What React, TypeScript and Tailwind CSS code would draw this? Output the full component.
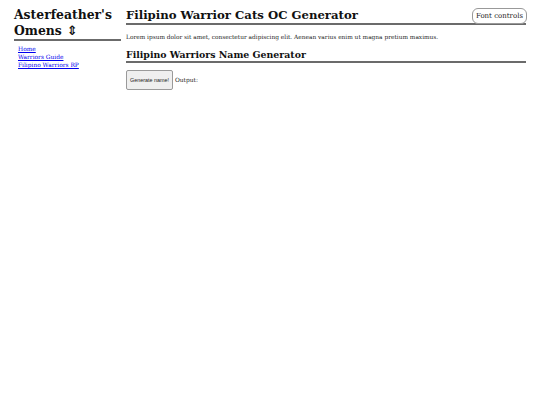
import React from "react";

export default function App() {
  const serif = { fontFamily: '"DejaVu Serif", Georgia, serif' };
  return (
    <div className="min-h-[405px] w-[540px] bg-white text-black" style={serif}>
      <div className="flex gap-[5px] px-[14px] pt-[7px]">
        <aside className="w-[107px] shrink-0">
          <h1 className="border-b-2 border-[#6b6b6b] text-[12.4px] font-bold leading-[16px] text-[#111]">
            <span className="block">Asterfeather's</span>
            <span className="flex items-start">
              <span>Omens</span>
              <span
                className="ml-[5px] h-[16px] text-[13px] font-bold leading-[16px]"
                style={{ fontFamily: '"DejaVu Sans", sans-serif' }}
              >
                ⇕
              </span>
            </span>
          </h1>
          <ul className="mt-[4px] pl-[4px] text-[5.9px] leading-[8px]">
            <li><a href="#" className="text-[#0000ee] underline">Home</a></li>
            <li><a href="#" className="text-[#0000ee] underline">Warriors Guide</a></li>
            <li><a href="#" className="text-[#0000ee] underline">Filipino Warriors RP</a></li>
          </ul>
        </aside>
        <main className="flex-1">
          <div className="relative">
            <h1 className="border-b-2 border-[#6b6b6b] text-[11.7px] font-bold leading-[16px] text-[#111]">
              Filipino Warrior Cats OC Generator
            </h1>
            <button
              className="absolute right-[-1px] top-[1px] h-[16px] rounded-[6px] border border-[#999] bg-white px-[3px] text-[7px] leading-[14px] text-[#222]"
              style={serif}
            >
              Font controls
            </button>
          </div>
          <p className="mt-[8px] text-[5.85px] leading-[8px] text-[#222]">
            Lorem ipsum dolor sit amet, consectetur adipiscing elit. Aenean varius enim ut magna pretium maximus.
          </p>
          <h2 className="mt-[8px] border-b-2 border-[#6b6b6b] text-[9.4px] font-bold leading-[12px] text-[#111]">
            Filipino Warriors Name Generator
          </h2>
          <div className="mt-[7px] flex items-center gap-[2px]">
            <button
              className="h-[20px] w-[47px] rounded-[2px] border border-[#9a9a9a] bg-[#efefef] p-0 text-[5.4px] text-[#222]"
              style={{ fontFamily: '"Liberation Sans", Arial, sans-serif' }}
            >
              Generate name!
            </button>
            <span className="text-[5.9px] text-[#222]">Output:</span>
          </div>
        </main>
      </div>
    </div>
  );
}
